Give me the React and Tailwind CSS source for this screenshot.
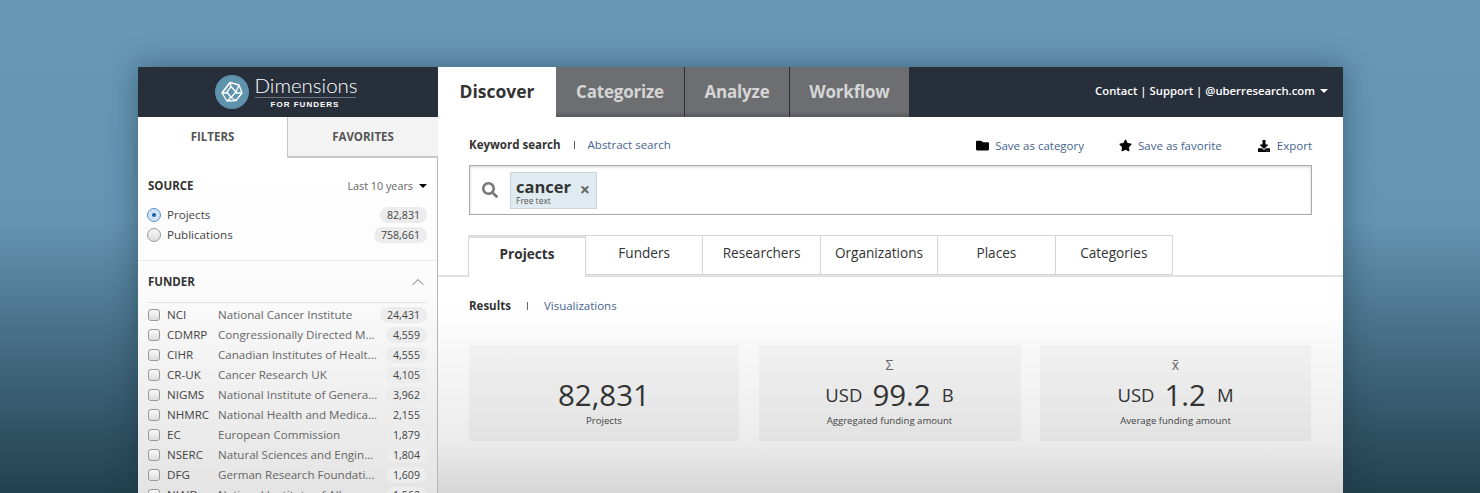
import { FaDownload, FaFolder, FaSearch, FaStar } from 'react-icons/fa'
import { ChevronUp } from 'lucide-react'

const funders = [
  ['NCI', 'National Cancer Institute', '24,431'],
  ['CDMRP', 'Congressionally Directed M...', '4,559'],
  ['CIHR', 'Canadian Institutes of Healt...', '4,555'],
  ['CR-UK', 'Cancer Research UK', '4,105'],
  ['NIGMS', 'National Institute of Genera...', '3,962'],
  ['NHMRC', 'National Health and Medica...', '2,155'],
  ['EC', 'European Commission', '1,879'],
  ['NSERC', 'Natural Sciences and Engin...', '1,804'],
  ['DFG', 'German Research Foundati...', '1,609'],
  ['NIAID', 'National Institute of Allergy...', '1,562'],
]

const subTabs = ['Funders', 'Researchers', 'Organizations', 'Places', 'Categories']

function Caret({ className }) {
  return (
    <svg className={className} width="8" height="4" viewBox="0 0 8 4">
      <path d="M0 0h8L4 4z" fill="currentColor" />
    </svg>
  )
}

function Logo() {
  return (
    <div className="flex items-center justify-center h-[50px] bg-[#272f3b] pr-[6px]">
      <svg width="34" height="34" viewBox="0 0 34 34">
        <circle cx="17" cy="17" r="17" fill="#5f93ac" />
        <g fill="none" stroke="#fff" strokeWidth="1.3" strokeLinejoin="round">
          <path d="M15 7.500l9 2.500 3 8-6 7.500-9 0.500-5-8z" />
          <path d="M12 17l4-5.500 5 5.500-5 5.500z M15 7.500l1 4 M24 10l-3 7 M27 18h-6 M21 25.500l-5-3 M12 26l4-3.500 M7 18h5 M7 18l8-10.500" />
        </g>
      </svg>
      <div className="ml-[6px] w-[101px] text-white">
        <div className="text-[20.500px] leading-[23px] font-light font-['Lato',sans-serif] border-b border-[#6c7480] h-[24px] whitespace-nowrap">
          Dimensions
        </div>
        <div className="text-[8px] leading-[13px] font-bold tracking-[1px] text-center font-['Liberation_Sans',sans-serif]">
          FOR FUNDERS
        </div>
      </div>
    </div>
  )
}

function Count({ children }) {
  return (
    <span className="rounded-full bg-[#ececec] px-[7px] h-[16px] leading-[16px] text-[10.600px] text-[#444]">
      {children}
    </span>
  )
}

function Sidebar() {
  return (
    <aside className="w-[300px] shrink-0 h-full flex flex-col">
      <Logo />
      <div className="flex h-[41px] text-[11.500px] font-bold text-[#555]">
        <div className="w-[149px] flex items-center justify-center bg-white pb-[2px]">FILTERS</div>
        <div className="flex-1 flex items-center justify-center bg-[#f3f3f3] border-l border-b-2 border-[#c8c8c8]">
          FAVORITES
        </div>
      </div>
      <div className="flex-1 bg-gradient-to-b from-white via-[#fbfbfb] via-[40%] to-[#e4e4e4] border-r border-[#b5b5b5] overflow-hidden">
        <div className="px-[10px] pt-[20px] pb-[15px] border-b border-[#ebebeb]">
          <div className="flex items-center justify-between h-[16px]">
            <span className="text-[11.500px] font-bold text-[#333]">SOURCE</span>
            <span className="flex items-center gap-[6px] text-[10.800px] text-[#666]">
              Last 10 years <Caret className="text-black" />
            </span>
          </div>
          <div className="mt-[11px] flex flex-col">
            <div className="flex items-center h-[20px] text-[11.600px] text-[#444]">
              <span className="w-[14px] h-[14px] rounded-full border border-[#5a8fc9] bg-[#cfe2f7] flex items-center justify-center ml-[-1px]">
                <span className="w-[4px] h-[4px] rounded-full bg-[#1f5fa8]" />
              </span>
              <span className="ml-[6px] flex-1">Projects</span>
              <Count>82,831</Count>
            </div>
            <div className="flex items-center h-[20px] text-[11.600px] text-[#444]">
              <span className="w-[14px] h-[14px] rounded-full border border-[#999] bg-gradient-to-b from-[#f8f8f8] to-[#dcdcdc] ml-[-1px]" />
              <span className="ml-[6px] flex-1">Publications</span>
              <Count>758,661</Count>
            </div>
          </div>
        </div>
        <div className="px-[10px] pt-[13px]">
          <div className="flex items-center justify-between h-[16px]">
            <span className="text-[11.500px] font-bold text-[#333]">FUNDER</span>
            <ChevronUp className="text-[#555] mr-[-1px]" size={20} strokeWidth={1} />
          </div>
          <div className="mt-[12px] border-t border-[#e4e4e4] pt-[2px]">
            {funders.map(([code, name, count]) => (
              <div key={code} className="flex items-center h-[20px] text-[11.600px]">
                <span className="w-[12px] h-[12px] rounded-[3px] border border-[#999] bg-gradient-to-b from-[#f8f8f8] to-[#dedede]" />
                <span className="ml-[7px] w-[51px] text-[#444]">{code}</span>
                <span className="flex-1 text-[#666] whitespace-nowrap overflow-hidden">{name}</span>
                <Count>{count}</Count>
              </div>
            ))}
          </div>
        </div>
      </div>
    </aside>
  )
}

function MainNav() {
  return (
    <header className="flex h-[50px] bg-[#272f3b]">
      <div className="w-[118px] bg-white flex items-center justify-center pb-[2px] text-[17.500px] font-bold text-[#333]">
        Discover
      </div>
      <div className="w-[129px] bg-gradient-to-b from-[#6d6e71] via-[#6d6e71] via-[90%] to-[#55575b] flex items-center justify-center text-[17px] font-bold tracking-[-0.2px] text-[#d5d5d5] border-r border-[#2b2f36]">
        Categorize
      </div>
      <div className="w-[105px] bg-gradient-to-b from-[#6d6e71] via-[#6d6e71] via-[90%] to-[#55575b] flex items-center justify-center text-[17px] font-bold tracking-[-0.2px] text-[#d5d5d5] border-r border-[#2b2f36]">
        Analyze
      </div>
      <div className="w-[119px] bg-gradient-to-b from-[#6d6e71] via-[#6d6e71] via-[90%] to-[#55575b] flex items-center justify-center text-[17px] font-bold tracking-[-0.2px] text-[#d5d5d5]">
        Workflow
      </div>
      <div className="flex-1 flex items-center justify-end pr-[15px] pb-[2px] text-[11.300px] font-semibold text-white gap-[5px]">
        <span>Contact | Support | @uberresearch.com</span>
        <Caret className="text-white" />
      </div>
    </header>
  )
}

function Stat({ symbol, value, unit, prefix, label }) {
  return (
    <div className="h-[96px] bg-gradient-to-b from-[#f1f1f1] to-[#e2e2e2] flex flex-col items-center">
      <div className="h-[23px] mt-[8px] text-[14px] leading-[23px] text-[#666]">{symbol}</div>
      <div className="h-[33px] mt-[2px] flex items-center gap-[10px] text-[#333]">
        {prefix && <span className="text-[18.500px]">{prefix}</span>}
        <span className="text-[29.500px] leading-[33px]">{value}</span>
        {unit && <span className="text-[18.500px] ml-[1px]">{unit}</span>}
      </div>
      <div className="mt-[3px] text-[9.600px] leading-[14px] text-[#444]">{label}</div>
    </div>
  )
}

export default function App() {
  return (
    <div className="h-[493px] overflow-hidden pt-[67px] bg-gradient-to-b from-[#6798b6] via-[#6394b1] via-[45%] to-[#23404f] font-['Open_Sans',sans-serif]">
      <div className="ml-[138px] w-[1205px] h-[426px] flex shadow-[0_0_28px_rgba(20,40,55,0.45)]">
        <Sidebar />
        <main className="flex-1 flex flex-col">
          <MainNav />
          <div className="flex-1 bg-[linear-gradient(#ffffff_50%,#f8f8f8_61%,#ececec_86%,#d6d6d6_100%)]">
            <div className="px-[31px] pt-[19px]">
              <div className="flex items-center justify-between h-[18px] text-[11.500px]">
                <div className="flex items-center">
                  <span className="font-bold text-[#333]">Keyword search</span>
                  <span className="mx-[13px] w-px h-[8px] bg-[#666]" />
                  <span className="text-[#44658f]">Abstract search</span>
                </div>
                <div className="flex items-center text-[#44658f] mt-[1px]">
                  <FaFolder className="text-black" size={13} />
                  <span className="ml-[6px]">Save as category</span>
                  <FaStar className="text-black ml-[35px]" size={13} />
                  <span className="ml-[6px]">Save as favorite</span>
                  <FaDownload className="text-black ml-[36px]" size={12} />
                  <span className="ml-[7px]">Export</span>
                </div>
              </div>
              <div className="mt-[11px] h-[50px] border border-[#aaa] shadow-[inset_0_1px_3px_rgba(0,0,0,0.18)] flex items-center pl-[12px]">
                <FaSearch className="text-[#777]" size={16} />
                <div className="ml-[12px] w-[87px] h-[37px] bg-[#e0ebf1] border border-[#cbd4d9] pl-[5px] relative">
                  <div className="text-[16.500px] leading-[19px] font-bold text-[#333] mt-[4px]">cancer</div>
                  <div className="text-[8.500px] leading-[9px] text-[#555]">Free text</div>
                  <span className="absolute right-[6px] top-[6px] text-[18px] leading-[20px] font-bold text-[#666]">×</span>
                </div>
              </div>
            </div>
            <div className="mt-[20px] pl-[30px] flex h-[42px] border-b-2 border-[#e2e2e2]">
              <div className="w-[118px] h-[42px] bg-white border border-b-0 border-[#d5d5d5] border-t-[3px] border-t-[#dcdcdc] flex items-center justify-center pb-[7px] text-[13.600px] font-bold text-[#333] z-10">
                Projects
              </div>
              {subTabs.map((t) => (
                <div key={t} className="w-[117.400px] h-[40px] border border-l-0 border-[#d5d5d5] flex items-center justify-center pb-[4px] text-[13.600px] text-[#333]">
                  {t}
                </div>
              ))}
            </div>
            <div className="px-[31px]">
              <div className="mt-[20px] flex items-center h-[18px] text-[11.500px]">
                <span className="font-bold text-[#333]">Results</span>
                <span className="mx-[16px] w-px h-[8px] bg-[#666]" />
                <span className="text-[#44658f]">Visualizations</span>
              </div>
              <div className="mt-[30px] grid grid-cols-[270px_262px_271px] gap-x-[19.500px]">
                <Stat value="82,831" label="Projects" />
                <Stat symbol="Σ" prefix="USD" value="99.2" unit="B" label="Aggregated funding amount" />
                <Stat symbol="x̄" prefix="USD" value="1.2" unit="M" label="Average funding amount" />
              </div>
            </div>
          </div>
        </main>
      </div>
    </div>
  )
}
